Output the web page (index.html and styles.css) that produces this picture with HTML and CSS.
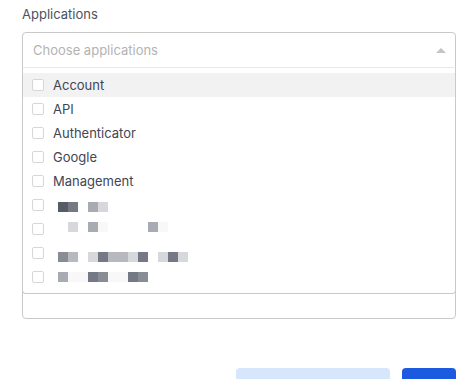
FILE: index.html
```html
<!DOCTYPE html>
<html lang="en">
<head>
    <meta charset="UTF-8">
    <meta name="viewport" content="width=device-width, initial-scale=1.0">
    <title>Applications</title>
    <link rel="stylesheet" href="styles.css">
</head>
<body>
    <div class="form">
        <label class="field-label">Applications</label>

        <div class="select">
            <div class="select-control">
                <span class="placeholder">Choose applications</span>
                <span class="caret"></span>
            </div>

            <div class="select-menu">
                <div class="option active">
                    <span class="checkbox"></span>
                    <span class="option-text">Account</span>
                </div>
                <div class="option">
                    <span class="checkbox"></span>
                    <span class="option-text">API</span>
                </div>
                <div class="option">
                    <span class="checkbox"></span>
                    <span class="option-text">Authenticator</span>
                </div>
                <div class="option">
                    <span class="checkbox"></span>
                    <span class="option-text">Google</span>
                </div>
                <div class="option">
                    <span class="checkbox"></span>
                    <span class="option-text">Management</span>
                </div>
                <!-- redacted names -->
                <div class="option">
                    <span class="checkbox"></span>
                    <span class="redacted down2">
                        <i class="a"></i><i class="b"></i><i></i><i class="d"></i><i class="f"></i>
                    </span>
                </div>
                <div class="option">
                    <span class="checkbox"></span>
                    <span class="redacted up2">
                        <i></i><i class="f"></i><i></i><i class="d"></i><i class="g"></i><i></i><i></i><i></i><i></i><i class="d"></i><i class="g"></i>
                    </span>
                </div>
                <div class="option">
                    <span class="checkbox"></span>
                    <span class="redacted down4">
                        <i class="c"></i><i class="e"></i><i></i><i class="f"></i><i class="b"></i><i class="e"></i><i class="e"></i><i class="f"></i><i class="b"></i><i></i><i class="f"></i><i class="b"></i><i class="f"></i>
                    </span>
                </div>
                <div class="option">
                    <span class="checkbox"></span>
                    <span class="redacted">
                        <i class="d"></i><i class="g"></i><i class="g"></i><i class="b"></i><i class="c"></i><i class="g"></i><i class="g"></i><i class="b"></i><i class="c"></i>
                    </span>
                </div>
            </div>
        </div>

        <div class="actions">
            <button class="btn btn-secondary"></button>
            <button class="btn btn-primary"></button>
        </div>
    </div>
</body>
</html>
```

FILE: styles.css
```css
body {
    margin: 0;
    background: #fff;
    font-family: 'Inter', 'Liberation Sans', sans-serif;
    font-size: 13px;
    color: #3f4654;
}

.form {
    width: 434px;
    margin-left: 22px;
    padding-top: 4px;
}

.field-label {
    display: block;
    line-height: 20px;
    color: #4b5260;
    margin-bottom: 8px;
}

.select {
    position: relative;
    height: 285px;
    border: 1px solid #c9c9c9;
    border-radius: 4px;
}

.select-control {
    display: flex;
    align-items: center;
    justify-content: space-between;
    height: 34px;
    padding: 0 10px;
}

.placeholder {
    color: #b3b3b3;
}

.caret {
    width: 0;
    height: 0;
    border-left: 5px solid transparent;
    border-right: 5px solid transparent;
    border-bottom: 5px solid #c4c4c4;
    margin-right: -1px;
}

/* dropdown overlays the field */
.select-menu {
    position: absolute;
    top: 34px;
    left: -1px;
    right: -1px;
    background: #fff;
    border: 1px solid #c9c9c9;
    border-top-color: #e8e8e8;
    border-radius: 0 0 4px 4px;
    padding: 5px 0 4px;
}

.option {
    display: flex;
    align-items: center;
    height: 24px;
    padding-left: 9px;
}

.option.active {
    background: #f2f2f2;
}

.checkbox {
    width: 10px;
    height: 10px;
    border: 1px solid #d6d6d6;
    border-radius: 2px;
    background: #fff;
    margin-right: 9px;
}

.option-text {
    line-height: 24px;
}

.redacted {
    display: flex;
    margin-left: 5px;
}

.redacted.down2 { margin-top: 4px; }
.redacted.up2 { margin-top: -4px; }
.redacted.down4 { margin-top: 8px; }

.redacted i {
    width: 10px;
    height: 10px;
}

.redacted .a { background: #555b67; }
.redacted .b { background: #747985; }
.redacted .c { background: #888c95; }
.redacted .d { background: #a8abb1; }
.redacted .e { background: #b7b9be; }
.redacted .f { background: #d7d8db; }
.redacted .g { background: #f8f8f9; }

.actions {
    display: flex;
    justify-content: flex-end;
    gap: 12px;
    margin-top: 49px;
}

.btn {
    height: 36px;
    border: none;
    border-radius: 4px;
    padding: 0;
}

.btn-secondary {
    width: 154px;
    background: #d6e6fb;
}

.btn-primary {
    width: 54px;
    background: #1c5ae0;
}
```
